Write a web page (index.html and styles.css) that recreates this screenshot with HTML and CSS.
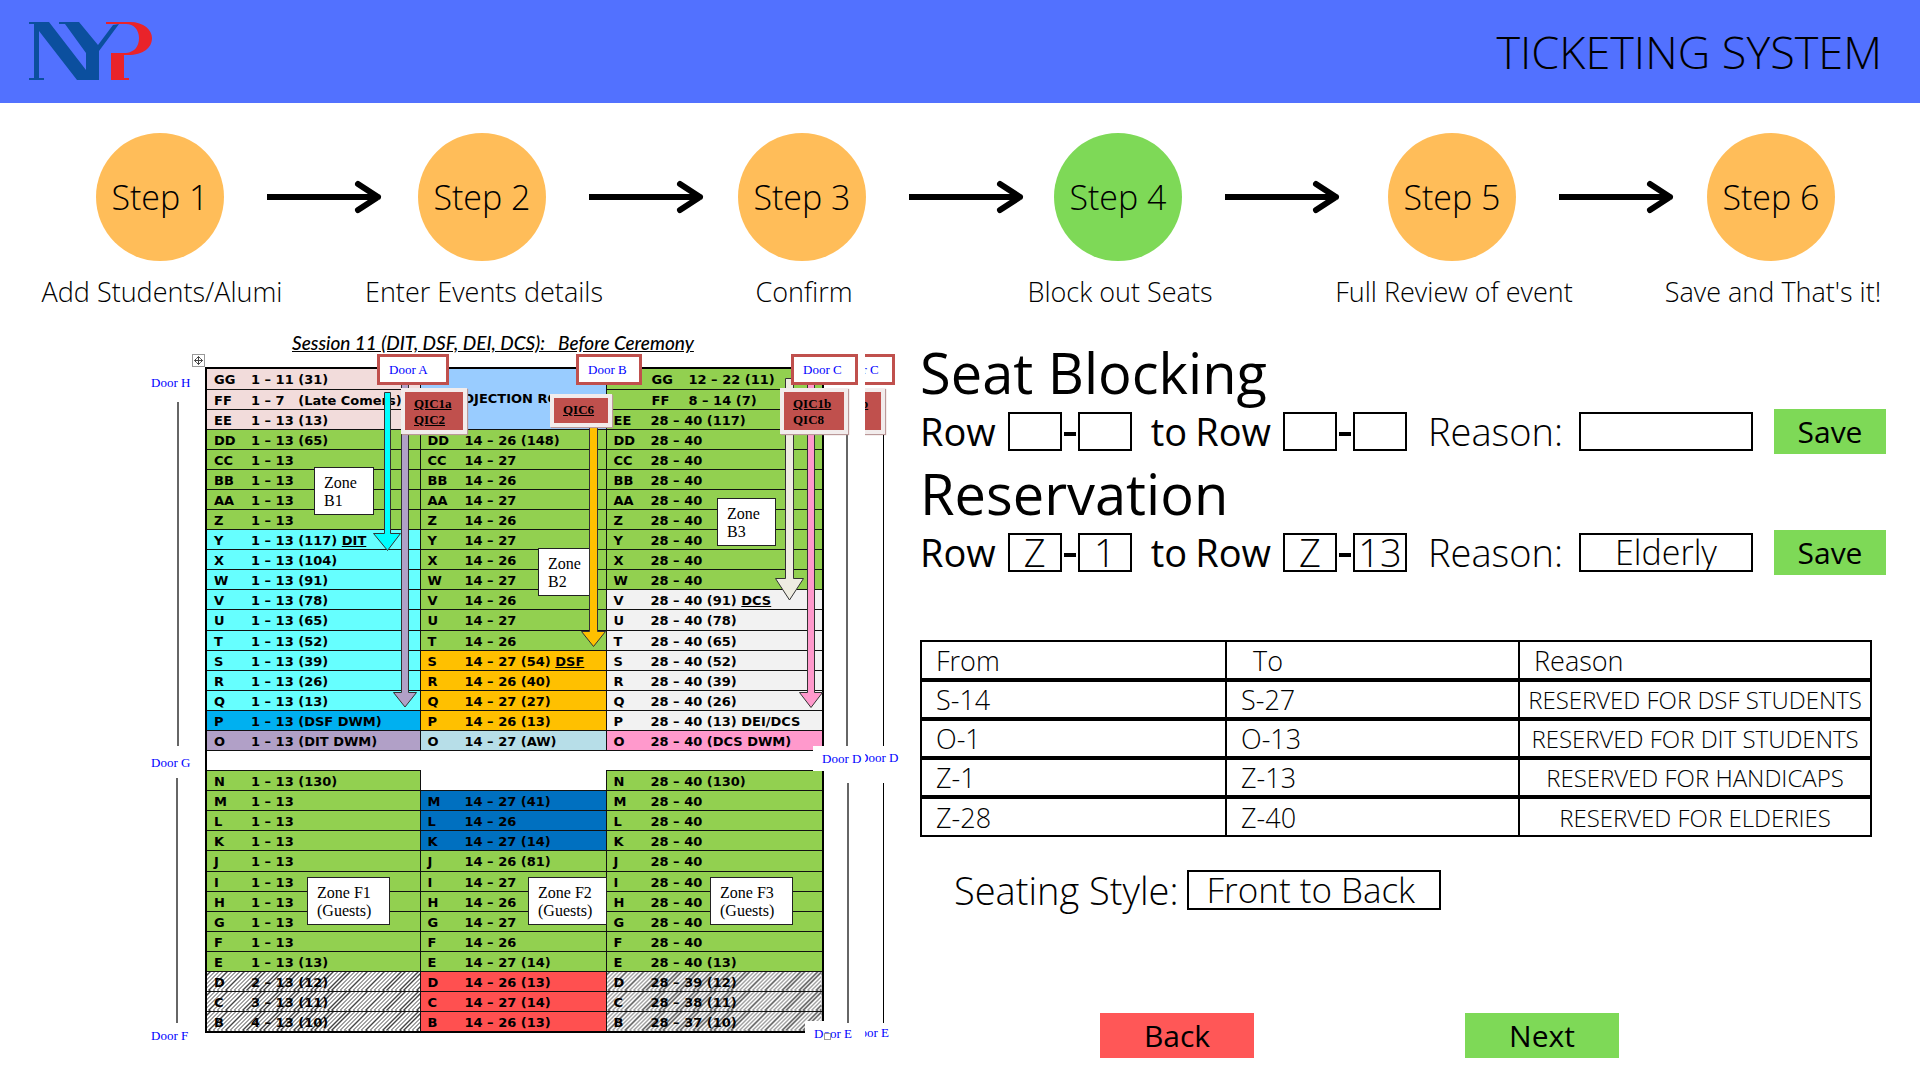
FILE: index.html
```html
<!DOCTYPE html>
<html lang="en">
<head>
<meta charset="utf-8">
<title>Ticketing System</title>
<link rel="stylesheet" href="styles.css">
</head>
<body>
<header class="topbar">
  <svg class="logo" viewBox="0 0 124 60" role="img" aria-label="NYP">
    <path fill="#0b4f9e" d="M0 0H20L57 48V31L36 2H30V0H50L69 23L84 3L90 2L70 29V58H48L10 9V56H15V58H0V56H5V2H0Z"/>
    <path fill="#e9232a" d="M77 0H101C115 0 123 8 123 16C123 26 114 33 99 33H95V56H100V58H82V31H97C106 30 110 24 110 16C110 8 105 2 97 2H77Z"/>
  </svg>
  <h1>TICKETING SYSTEM</h1>
</header>

<ol class="steps">
  <li class="step"><span class="circle">Step 1</span><span class="caption">Add Students/Alumi</span></li>
  <li class="arrow" aria-hidden="true"><svg viewBox="0 0 116 34"><path d="M0 17H111M91 4L111 17L91 30"/></svg></li>
  <li class="step"><span class="circle">Step 2</span><span class="caption">Enter Events details</span></li>
  <li class="arrow" aria-hidden="true"><svg viewBox="0 0 116 34"><path d="M0 17H111M91 4L111 17L91 30"/></svg></li>
  <li class="step"><span class="circle">Step 3</span><span class="caption">Confirm</span></li>
  <li class="arrow" aria-hidden="true"><svg viewBox="0 0 116 34"><path d="M0 17H111M91 4L111 17L91 30"/></svg></li>
  <li class="step current" aria-current="step"><span class="circle">Step 4</span><span class="caption">Block out Seats</span></li>
  <li class="arrow" aria-hidden="true"><svg viewBox="0 0 116 34"><path d="M0 17H111M91 4L111 17L91 30"/></svg></li>
  <li class="step"><span class="circle">Step 5</span><span class="caption">Full Review of event</span></li>
  <li class="arrow" aria-hidden="true"><svg viewBox="0 0 116 34"><path d="M0 17H111M91 4L111 17L91 30"/></svg></li>
  <li class="step"><span class="circle">Step 6</span><span class="caption">Save and That's it!</span></li>
</ol>

<main class="content">
  <figure class="plan">
    <figcaption>Session 11 (DIT, DSF, DEI, DCS):&nbsp;&nbsp; Before Ceremony</figcaption>
    <table class="seats">
      <colgroup><col class="c-left"><col class="c-mid"><col class="c-right"></colgroup>
      <tbody>
      <tr><td class="rose"><b>GG</b>1 – 11 (31)</td><td class="projection" rowspan="3">PROJECTION ROOM</td><td class="inset"><b>GG</b>12 – 22 (11)</td></tr>
      <tr><td class="rose"><b>FF</b>1 – 7&nbsp;&nbsp; (Late Comers)</td><td class="inset"><b>FF</b>8 – 14 (7)</td></tr>
      <tr><td class="rose"><b>EE</b>1 – 13 (13)</td><td><b>EE</b>28 – 40 (117)</td></tr>
      <tr><td><b>DD</b>1 – 13 (65)</td><td><b>DD</b>14 – 26 (148)</td><td><b>DD</b>28 – 40</td></tr>
      <tr><td><b>CC</b>1 – 13</td><td><b>CC</b>14 – 27</td><td><b>CC</b>28 – 40</td></tr>
      <tr><td><b>BB</b>1 – 13</td><td><b>BB</b>14 – 26</td><td><b>BB</b>28 – 40</td></tr>
      <tr><td><b>AA</b>1 – 13</td><td><b>AA</b>14 – 27</td><td><b>AA</b>28 – 40</td></tr>
      <tr><td><b>Z</b>1 – 13</td><td><b>Z</b>14 – 26</td><td><b>Z</b>28 – 40</td></tr>
      <tr><td class="cyan"><b>Y</b>1 – 13 (117) <u>DIT</u></td><td><b>Y</b>14 – 27</td><td><b>Y</b>28 – 40</td></tr>
      <tr><td class="cyan"><b>X</b>1 – 13 (104)</td><td><b>X</b>14 – 26</td><td><b>X</b>28 – 40</td></tr>
      <tr><td class="cyan"><b>W</b>1 – 13 (91)</td><td><b>W</b>14 – 27</td><td><b>W</b>28 – 40</td></tr>
      <tr><td class="cyan"><b>V</b>1 – 13 (78)</td><td><b>V</b>14 – 26</td><td class="pale"><b>V</b>28 – 40 (91) <u>DCS</u></td></tr>
      <tr><td class="cyan"><b>U</b>1 – 13 (65)</td><td><b>U</b>14 – 27</td><td class="pale"><b>U</b>28 – 40 (78)</td></tr>
      <tr><td class="cyan"><b>T</b>1 – 13 (52)</td><td><b>T</b>14 – 26</td><td class="pale"><b>T</b>28 – 40 (65)</td></tr>
      <tr><td class="cyan"><b>S</b>1 – 13 (39)</td><td class="amber"><b>S</b>14 – 27 (54) <u>DSF</u></td><td class="pale"><b>S</b>28 – 40 (52)</td></tr>
      <tr><td class="cyan"><b>R</b>1 – 13 (26)</td><td class="amber"><b>R</b>14 – 26 (40)</td><td class="pale"><b>R</b>28 – 40 (39)</td></tr>
      <tr><td class="cyan"><b>Q</b>1 – 13 (13)</td><td class="amber"><b>Q</b>14 – 27 (27)</td><td class="pale"><b>Q</b>28 – 40 (26)</td></tr>
      <tr><td class="azure"><b>P</b>1 – 13 (DSF DWM)</td><td class="amber"><b>P</b>14 – 26 (13)</td><td class="pale"><b>P</b>28 – 40 (13) DEI/DCS</td></tr>
      <tr><td class="mauve"><b>O</b>1 – 13 (DIT DWM)</td><td class="ice"><b>O</b>14 – 27 (AW)</td><td class="pink"><b>O</b>28 – 40 (DCS DWM)</td></tr>
      <tr><td class="aisle" colspan="3"></td></tr>
      <tr><td><b>N</b>1 – 13 (130)</td><td class="blank"></td><td><b>N</b>28 – 40 (130)</td></tr>
      <tr><td><b>M</b>1 – 13</td><td class="blue"><b>M</b>14 – 27 (41)</td><td><b>M</b>28 – 40</td></tr>
      <tr><td><b>L</b>1 – 13</td><td class="blue"><b>L</b>14 – 26</td><td><b>L</b>28 – 40</td></tr>
      <tr><td><b>K</b>1 – 13</td><td class="blue"><b>K</b>14 – 27 (14)</td><td><b>K</b>28 – 40</td></tr>
      <tr><td><b>J</b>1 – 13</td><td><b>J</b>14 – 26 (81)</td><td><b>J</b>28 – 40</td></tr>
      <tr><td><b>I</b>1 – 13</td><td><b>I</b>14 – 27</td><td><b>I</b>28 – 40</td></tr>
      <tr><td><b>H</b>1 – 13</td><td><b>H</b>14 – 26</td><td><b>H</b>28 – 40</td></tr>
      <tr><td><b>G</b>1 – 13</td><td><b>G</b>14 – 27</td><td><b>G</b>28 – 40</td></tr>
      <tr><td><b>F</b>1 – 13</td><td><b>F</b>14 – 26</td><td><b>F</b>28 – 40</td></tr>
      <tr><td><b>E</b>1 – 13 (13)</td><td><b>E</b>14 – 27 (14)</td><td><b>E</b>28 – 40 (13)</td></tr>
      <tr><td class="hatch"><b>D</b>2 – 13 (12)</td><td class="red"><b>D</b>14 – 26 (13)</td><td class="hatch"><b>D</b>28 – 39 (12)</td></tr>
      <tr><td class="hatch"><b>C</b>3 – 13 (11)</td><td class="red"><b>C</b>14 – 27 (14)</td><td class="hatch"><b>C</b>28 – 38 (11)</td></tr>
      <tr><td class="hatch"><b>B</b>4 – 13 (10)</td><td class="red"><b>B</b>14 – 26 (13)</td><td class="hatch"><b>B</b>28 – 37 (10)</td></tr>
      </tbody>
    </table>

    <span class="zone zone-b1">Zone<br>B1</span>
    <span class="zone zone-b2">Zone<br>B2</span>
    <span class="zone zone-b3">Zone<br>B3</span>
    <span class="zone guests zone-f1">Zone F1<br>(Guests)</span>
    <span class="zone guests zone-f2">Zone F2<br>(Guests)</span>
    <span class="zone guests zone-f3">Zone F3<br>(Guests)</span>
    <span class="door door-d">Door D</span>
    <span class="door door-e">Door E</span>

    <svg class="routes" viewBox="0 0 765 740" aria-hidden="true">
      <g stroke="#333">
        <path fill="#0ff" d="M244.500 72.500H250.500V213.500H260.500L247.500 230.500L233.500 213.500H244.500Z"/>
        <path fill="#b1a0c7" d="M261.500 64.500H268.500V372.500H276.500L265 387L253.500 372.500H261.500Z"/>
        <path fill="#ffc000" d="M449.500 107.500H457.500V311.500H465.500L453.500 326.500L441.500 311.500H449.500Z"/>
        <path fill="#eeece1" d="M645.500 58.500H653.500V258.500H663.500L649.500 280L635.500 258.500H645.500Z"/>
        <path fill="#ff99cc" d="M667.500 64.500H674.500V372.500H682.500L671 387.500L659.500 372.500H667.500Z"/>
      </g>
      <path fill="none" stroke="#666" stroke-width="2" d="M38 82V426M37 458V703M707 113V426M708 463V703"/>
      <g fill="#fff" stroke="#999"><rect x="52.500" y="34.500" width="12" height="12"/><rect x="684.500" y="713.500" width="6" height="6"/></g>
      <path fill="none" stroke="#444" d="M54.500 40.500H62.500M58.500 36.500V44.500M56.500 38.500L54.500 40.500L56.500 42.500M60.500 38.500L62.500 40.500L60.500 42.500M56.500 38.500L58.500 36.500L60.500 38.500M56.500 42.500L58.500 44.500L60.500 42.500"/>
    </svg>

    <span class="door door-h">Door H</span>
    <span class="door door-g">Door G</span>
    <span class="door door-f">Door F</span>
    <span class="door framed door-a">Door A</span>
    <span class="door framed door-b">Door B</span>
    <span class="door framed door-c">Door C</span>
    <span class="qic qic-1a"><u>QIC1a</u><br><u>QIC2</u></span>
    <span class="qic qic-6"><u>QIC6</u></span>
    <span class="qic qic-1b"><u>QIC1b</u><br>QIC8</span>

    <div class="edge" aria-hidden="true">
      <span class="door framed edge-c">Door C</span>
      <span class="qic edge-qic"><u>QIC1b</u></span>
      <span class="edge-line edge-upper"></span>
      <span class="door edge-d">Door D</span>
      <span class="edge-line edge-lower"></span>
      <span class="door edge-e">Door E</span>
    </div>
  </figure>

  <section class="panel">
    <h2>Seat Blocking</h2>
    <form class="range">
      <label for="b-row1">Row</label>
      <input class="cell" id="b-row1"><span class="dash"></span><input class="cell" aria-label="From seat">
      <span class="to">to</span>
      <label for="b-row2">Row</label>
      <input class="cell" id="b-row2"><span class="dash"></span><input class="cell" aria-label="To seat">
      <label class="light" for="b-reason">Reason:</label>
      <input class="reason" id="b-reason">
      <button class="btn save" type="button">Save</button>
    </form>
    <h2>Reservation</h2>
    <form class="range">
      <label for="r-row1">Row</label>
      <input class="cell" id="r-row1" value="Z"><span class="dash"></span><input class="cell" aria-label="From seat" value="1">
      <span class="to">to</span>
      <label for="r-row2">Row</label>
      <input class="cell" id="r-row2" value="Z"><span class="dash"></span><input class="cell" aria-label="To seat" value="13">
      <label class="light" for="r-reason">Reason:</label>
      <input class="reason" id="r-reason" value="Elderly">
      <button class="btn save" type="button">Save</button>
    </form>

    <table class="bookings">
      <colgroup><col class="b-from"><col class="b-to"><col class="b-reason"></colgroup>
      <thead><tr><th>From</th><th class="head-to">To</th><th>Reason</th></tr></thead>
      <tbody>
        <tr><td>S-14</td><td>S-27</td><td class="why">RESERVED FOR DSF STUDENTS</td></tr>
        <tr><td>O-1</td><td>O-13</td><td class="why">RESERVED FOR DIT STUDENTS</td></tr>
        <tr><td>Z-1</td><td>Z-13</td><td class="why">RESERVED FOR HANDICAPS</td></tr>
        <tr><td>Z-28</td><td>Z-40</td><td class="why">RESERVED FOR ELDERIES</td></tr>
      </tbody>
    </table>

    <div class="style-row">
      <label for="style">Seating Style:</label>
      <select id="style"><option>Front to Back</option></select>
    </div>

    <div class="actions">
      <button class="btn nav back" type="button">Back</button>
      <button class="btn nav" type="button">Next</button>
    </div>
  </section>
</main>
</body>
</html>
```
FILE: styles.css
```css
* { box-sizing: border-box; }
body {
  margin: 0;
  background: #fff;
  color: #000;
  font-family: "Open Sans", sans-serif;
  font-weight: 300;
}
h1, h2, figure, ol { margin: 0; padding: 0; }
input, select, button { font: inherit; color: inherit; border-radius: 0; }

.topbar {
  display: flex;
  align-items: center;
  justify-content: space-between;
  height: 103px;
  padding: 0 38px 0 29px;
  background: #5271ff;
}
.logo { width: 124px; height: 60px; }
h1 { font-size: 45px; line-height: 60px; font-weight: 300; }

.steps {
  display: grid;
  grid-template-columns: 128px 194fr 128px 192fr 128px 188fr 128px 206fr 128px 191fr 128px;
  padding: 30px 85px 0 96px;
  list-style: none;
}
.step { display: flex; flex-direction: column; align-items: center; }
.circle {
  display: flex;
  align-items: center;
  justify-content: center;
  width: 128px;
  height: 128px;
  border-radius: 50%;
  background: #ffbd59;
  font-size: 34px;
}
.current .circle { background: #7ed957; }
.caption { padding-left: 4px; margin-top: 13px; font-size: 27px; line-height: 36px; white-space: nowrap; }
.arrow { height: 128px; padding-left: 43px; display: flex; align-items: center; }
.arrow svg {
  width: 116px;
  height: 34px;
  fill: none;
  stroke: #000;
  stroke-width: 6;
  stroke-linecap: round;
  stroke-linejoin: round;
}

.content { display: grid; grid-template-columns: minmax(0, 920fr) minmax(0, 1000fr); padding-top: 10px; }

/* seating plan */
.plan { position: relative; width: 765px; margin-left: 140px; padding: 4px 0 36px 65px; }
figcaption {
  height: 43px;
  padding-left: 87px;
  font: italic 500 19px/37px Lato, sans-serif;
  text-decoration: underline;
  white-space: nowrap;
}
.seats {
  width: 619px;
  table-layout: fixed;
  border-collapse: collapse;
  border: 2px solid #000;
  font: 700 13px/17px "DejaVu Sans", sans-serif;
}
.c-left { width: 214px; }
.c-mid { width: 186px; }
.seats td {
  height: 20px;
  padding: 2px 0 0 7px;
  border: 1px solid #111;
  background: #92d050;
  white-space: nowrap;
}
.seats tr:nth-child(12n + 1) td { height: 21px; }
.seats b { display: inline-block; width: 37px; }
.seats .inset { padding-left: 45px; }
.seats .projection { padding: 0; background: #9cf; text-align: center; }
.seats .rose { background: #f2dcdb; }
.seats .cyan { background: #6ff; }
.seats .pale { background: #f2f2f2; }
.seats .amber { background: #ffc000; }
.seats .azure { background: #00b0f0; }
.seats .mauve { background: #b1a0c7; }
.seats .ice { background: #b7dee8; }
.seats .pink { background: #f9c; }
.seats .blue { background: #0070c0; }
.seats .red { background: #ff5050; }
.seats .aisle { background: #fff; border-bottom: 0; }
.seats .blank { background: #fff; border-top: 0; }
.seats .hatch { background: repeating-linear-gradient(135deg, #fff 0 2px, #444 2px 3px); }

.routes { position: absolute; left: 0; top: 0; width: 765px; height: 740px; }
.zone, .door, .qic { position: absolute; font-family: "Liberation Serif", serif; font-weight: 400; white-space: nowrap; }
.zone {
  height: 48px;
  padding: 6px 0 0 9px;
  border: 1px solid #222;
  background: #fff;
  font-size: 16px;
  line-height: 18px;
}
.zone-b1 { left: 174px; top: 147px; width: 60px; }
.zone-b2 { left: 398px; top: 228px; width: 52px; }
.zone-b3 { left: 577px; top: 178px; width: 59px; }
.guests { width: 83px; }
.zone-f1 { left: 167px; top: 557px; }
.zone-f2 { left: 388px; top: 557px; width: 79px; }
.zone-f3 { left: 570px; top: 557px; }
.door { color: #00f; font-size: 13px; line-height: 20px; }
.door-h { left: 11px; top: 53px; }
.door-g { left: 11px; top: 433px; }
.door-f { left: 11px; top: 706px; }
.framed { height: 31px; padding: 3px 9px; border: 3px solid #c0504d; background: #fff; }
.door-a { left: 237px; top: 34px; width: 72px; }
.door-b { left: 436px; top: 34px; width: 66px; }
.door-c { left: 651px; top: 34px; width: 67px; }
.door-d { left: 673px; top: 426px; width: 52px; padding-left: 9px; background: #fff; line-height: 25px; }
.door-e { left: 665px; top: 701px; width: 60px; padding-left: 9px; background: #fff; line-height: 25px; }
.qic {
  padding: 4px 9px;
  border: 4px solid #f2ecec;
  background: #c0504d;
  box-shadow: 1px 1px 1px #b99;
  font-size: 13px;
  line-height: 16px;
  font-weight: 700;
}
.qic-1a { left: 261px; top: 68px; width: 66px; height: 46px; }
.qic-6 { left: 410px; top: 74px; width: 62px; height: 33px; }
.qic-1b { left: 640px; top: 68px; width: 68px; height: 46px; }

/* right-hand strip of the plan, cut off at its left side */
.edge { position: absolute; left: 725px; top: 0; width: 40px; height: 740px; overflow: hidden; background: #fff; }
.edge-c { left: -37px; top: 34px; width: 67px; }
.edge-qic { left: -48px; top: 68px; width: 68px; height: 46px; }
.edge-line { position: absolute; left: 18px; width: 1px; background: #000; }
.edge-upper { top: 115px; height: 311px; }
.edge-lower { top: 463px; height: 240px; }
.edge-d { left: -6px; top: 428px; }
.edge-e { left: -14px; top: 703px; }

/* booking panel */
.panel { padding: 16px 34px 0 0; }
h2 { font-size: 56px; line-height: 73px; font-weight: 400; }
.range { display: flex; align-items: center; height: 44px; font-size: 38px; font-weight: 400; }
.range + h2 { margin-top: 4px; }
.range label { line-height: 44px; }
.range input, select { border: 2px solid #000; background: #fff; font-weight: 300; outline: 0; }
.range input { height: 39px; padding: 0; text-align: center; }
.cell { width: 54px; }
label + .cell { margin-left: 12px; }
.dash { width: 12px; height: 4px; margin: 5px 2px 0; background: #000; }
.to { margin: 0 8px 0 19px; }
.range .light { margin: 0 16px 0 21px; font-weight: 300; }
.range .reason { flex: 1; min-width: 0; font-size: 34px; }
.btn { border: 0; padding: 0; background: #7ed957; font-size: 30px; font-weight: 400; }
.save { width: 112px; height: 45px; margin-left: 21px; }

.bookings {
  width: calc(100% - 14px);
  margin-top: 66px;
  table-layout: fixed;
  border-collapse: collapse;
  font-size: 27px;
  line-height: 35px;
}
.b-from { width: 305px; }
.b-to { width: 293px; }
.bookings th, .bookings td {
  height: 39px;
  padding: 0 0 0 14px;
  border: 2px solid #000;
  border-width: 4px 2px;
  text-align: left;
  font-weight: 300;
}
.bookings th { border-top-width: 2px; }
.bookings tr:last-child td { border-bottom-width: 2px; }
.bookings .head-to { padding-left: 26px; }
.bookings .why { padding: 0; text-align: center; font-size: 24px; white-space: nowrap; }

.style-row { display: flex; align-items: center; margin: 27px 0 0 34px; font-size: 38px; }
select { appearance: none; width: 254px; height: 40px; margin-left: 9px; padding: 0 0 0 17px; font-size: 35px; line-height: 36px; }

.actions { display: flex; gap: 211px; margin: 97px 0 0 180px; }
.nav { width: 154px; height: 45px; }
.back { background: #ff5757; }
```
